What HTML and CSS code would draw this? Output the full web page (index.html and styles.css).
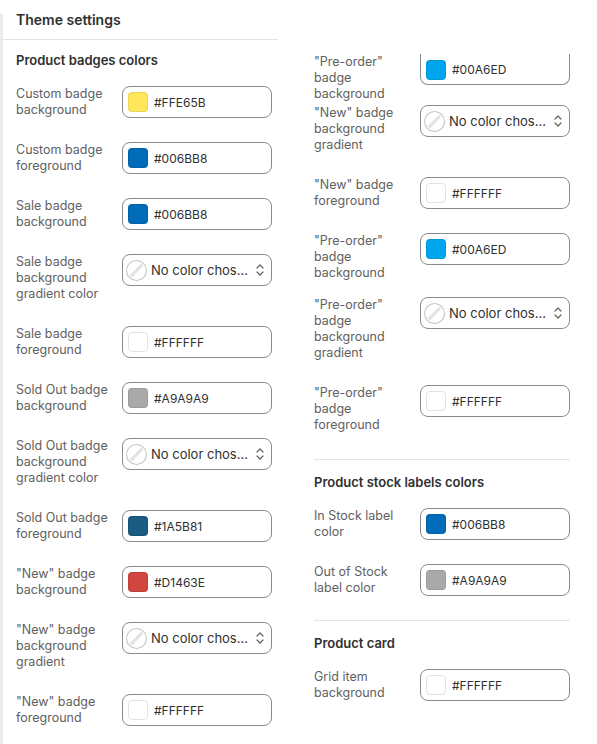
FILE: index.html
```html
<!DOCTYPE html>
<html lang="en">

<head>
    <meta charset="UTF-8">
    <meta name="viewport" content="width=device-width, initial-scale=1.0">
    <title>Theme settings</title>
    <link rel="stylesheet" href="styles.css">
</head>

<body>
    <div class="page">
        <div class="rail"></div>

        <div class="panel">
            <div class="panel-head">
                <h1>Theme settings</h1>
            </div>

            <div class="section">
                <h2>Product badges colors</h2>

                <div class="field">
                    <label>Custom badge background</label>
                    <div class="picker">
                        <span class="swatch" style="background:#FFE65B"></span>
                        <span class="value">#FFE65B</span>
                    </div>
                </div>
                <div class="field">
                    <label>Custom badge foreground</label>
                    <div class="picker">
                        <span class="swatch" style="background:#006BB8"></span>
                        <span class="value">#006BB8</span>
                    </div>
                </div>
                <div class="field">
                    <label>Sale badge background</label>
                    <div class="picker">
                        <span class="swatch" style="background:#006BB8"></span>
                        <span class="value">#006BB8</span>
                    </div>
                </div>
                <div class="field">
                    <label>Sale badge background gradient color</label>
                    <div class="picker select">
                        <svg class="none" viewBox="0 0 20 20"><circle cx="10" cy="10" r="9.5"/><line x1="4.5" y1="15.5" x2="15.5" y2="4.5"/></svg>
                        <span class="value">No color chos...</span>
                        <svg class="chevron" viewBox="0 0 10 14"><path d="M2 5 L5 2 L8 5 M2 9 L5 12 L8 9"/></svg>
                    </div>
                </div>
                <div class="field">
                    <label>Sale badge foreground</label>
                    <div class="picker">
                        <span class="swatch white"></span>
                        <span class="value">#FFFFFF</span>
                    </div>
                </div>
                <div class="field">
                    <label>Sold Out badge background</label>
                    <div class="picker">
                        <span class="swatch" style="background:#A9A9A9"></span>
                        <span class="value">#A9A9A9</span>
                    </div>
                </div>
                <div class="field">
                    <label>Sold Out badge background gradient color</label>
                    <div class="picker select">
                        <svg class="none" viewBox="0 0 20 20"><circle cx="10" cy="10" r="9.5"/><line x1="4.5" y1="15.5" x2="15.5" y2="4.5"/></svg>
                        <span class="value">No color chos...</span>
                        <svg class="chevron" viewBox="0 0 10 14"><path d="M2 5 L5 2 L8 5 M2 9 L5 12 L8 9"/></svg>
                    </div>
                </div>
                <div class="field">
                    <label>Sold Out badge foreground</label>
                    <div class="picker">
                        <span class="swatch" style="background:#1A5B81"></span>
                        <span class="value">#1A5B81</span>
                    </div>
                </div>
                <div class="field">
                    <label>"New" badge background</label>
                    <div class="picker">
                        <span class="swatch" style="background:#D1463E"></span>
                        <span class="value">#D1463E</span>
                    </div>
                </div>
                <div class="field">
                    <label>"New" badge background gradient</label>
                    <div class="picker select">
                        <svg class="none" viewBox="0 0 20 20"><circle cx="10" cy="10" r="9.5"/><line x1="4.5" y1="15.5" x2="15.5" y2="4.5"/></svg>
                        <span class="value">No color chos...</span>
                        <svg class="chevron" viewBox="0 0 10 14"><path d="M2 5 L5 2 L8 5 M2 9 L5 12 L8 9"/></svg>
                    </div>
                </div>
                <div class="field">
                    <label>"New" badge foreground</label>
                    <div class="picker">
                        <span class="swatch white"></span>
                        <span class="value">#FFFFFF</span>
                    </div>
                </div>
            </div>
        </div>

        <div class="column">
            <div class="field tight">
                <label>"Pre-order" badge background</label>
                <div class="picker cut">
                    <span class="swatch" style="background:#00A6ED"></span>
                    <span class="value">#00A6ED</span>
                </div>
            </div>
            <div class="field">
                <label>"New" badge background gradient</label>
                <div class="picker select">
                    <svg class="none" viewBox="0 0 20 20"><circle cx="10" cy="10" r="9.5"/><line x1="4.5" y1="15.5" x2="15.5" y2="4.5"/></svg>
                    <span class="value">No color chos...</span>
                    <svg class="chevron" viewBox="0 0 10 14"><path d="M2 5 L5 2 L8 5 M2 9 L5 12 L8 9"/></svg>
                </div>
            </div>
            <div class="field">
                <label>"New" badge foreground</label>
                <div class="picker">
                    <span class="swatch white"></span>
                    <span class="value">#FFFFFF</span>
                </div>
            </div>
            <div class="field short">
                <label>"Pre-order" badge background</label>
                <div class="picker">
                    <span class="swatch" style="background:#00A6ED"></span>
                    <span class="value">#00A6ED</span>
                </div>
            </div>
            <div class="field">
                <label>"Pre-order" badge background gradient</label>
                <div class="picker select">
                    <svg class="none" viewBox="0 0 20 20"><circle cx="10" cy="10" r="9.5"/><line x1="4.5" y1="15.5" x2="15.5" y2="4.5"/></svg>
                    <span class="value">No color chos...</span>
                    <svg class="chevron" viewBox="0 0 10 14"><path d="M2 5 L5 2 L8 5 M2 9 L5 12 L8 9"/></svg>
                </div>
            </div>
            <div class="field last">
                <label>"Pre-order" badge foreground</label>
                <div class="picker">
                    <span class="swatch white"></span>
                    <span class="value">#FFFFFF</span>
                </div>
            </div>

            <div class="section bordered">
                <h2>Product stock labels colors</h2>
                <div class="field">
                    <label>In Stock label color</label>
                    <div class="picker">
                        <span class="swatch" style="background:#006BB8"></span>
                        <span class="value">#006BB8</span>
                    </div>
                </div>
                <div class="field">
                    <label>Out of Stock label color</label>
                    <div class="picker">
                        <span class="swatch" style="background:#A9A9A9"></span>
                        <span class="value">#A9A9A9</span>
                    </div>
                </div>
            </div>

            <div class="section bordered">
                <h2>Product card</h2>
                <div class="field">
                    <label>Grid item background</label>
                    <div class="picker">
                        <span class="swatch white"></span>
                        <span class="value">#FFFFFF</span>
                    </div>
                </div>
            </div>
        </div>
    </div>
</body>

</html>
```

FILE: styles.css
```css
* {
    margin: 0;
    padding: 0;
    box-sizing: border-box;
}

body {
    font-family: Inter, "Noto Sans", sans-serif;
    font-size: 12px;
    color: #303030;
    background: #fff;
    height: 744px;
    overflow: hidden;
}

.page {
    display: flex;
    align-items: flex-start;
    height: 744px;
}

.rail {
    width: 3px;
    align-self: stretch;
    margin-top: 14px;
    background-color: #ebebeb;
}

.panel {
    width: 275px;
    flex-shrink: 0;
}

.panel-head {
    height: 40px;
    padding: 10px 0 0 13px;
    border-bottom: 1px solid #e3e3e3;
}

h1 {
    font-size: 14px;
    font-weight: 600;
    line-height: 20px;
    color: #303030;
}

h2 {
    font-size: 13px;
    font-weight: 600;
    line-height: 20px;
    color: #303030;
    margin-bottom: 16px;
}

.panel .section {
    padding: 10px 0 0 13px;
}

.field {
    display: grid;
    grid-template-columns: 106px 150px;
    align-items: start;
    margin-bottom: 24px;
}

.field.tight {
    margin-bottom: 3px;
}

.field.short {
    margin-bottom: 16px;
}

.field.last {
    margin-bottom: 26px;
}

.field label {
    font-size: 12.5px;
    line-height: 16px;
    color: #616161;
    padding-right: 12px;
}

.picker {
    height: 32px;
    border: 1px solid #8a8a8a;
    border-radius: 8px;
    display: flex;
    align-items: center;
    padding: 0 5px;
    background: #fff;
}

.picker.cut {
    height: 31px;
    border-top: none;
    border-radius: 0 0 8px 8px;
    padding-top: 1px;
}

.swatch {
    width: 20px;
    height: 20px;
    border-radius: 4px;
    border: 1px solid rgba(0, 0, 0, 0.08);
    margin-right: 6px;
    flex-shrink: 0;
}

.swatch.white {
    background: #fff;
    border-color: #e3e3e3;
}

.value {
    color: #303030;
    white-space: nowrap;
}

.select {
    padding-left: 3px;
}

.select .value {
    font-size: 13px;
}

.none {
    width: 21px;
    height: 21px;
    margin-right: 4px;
    flex-shrink: 0;
}

.none circle {
    fill: #fff;
    stroke: #c4c4c4;
    stroke-width: 1;
}

.none line {
    stroke: #e3e3e3;
    stroke-width: 3;
}

.chevron {
    width: 10px;
    height: 14px;
    margin-left: auto;
    margin-right: 1px;
    fill: none;
    stroke: #616161;
    stroke-width: 1.2;
    stroke-linecap: round;
    stroke-linejoin: round;
}

.column {
    width: 256px;
    margin-left: 36px;
    margin-top: 54px;
}

.column .section.bordered {
    border-top: 1px solid #e3e3e3;
    padding-top: 12px;
}
```
